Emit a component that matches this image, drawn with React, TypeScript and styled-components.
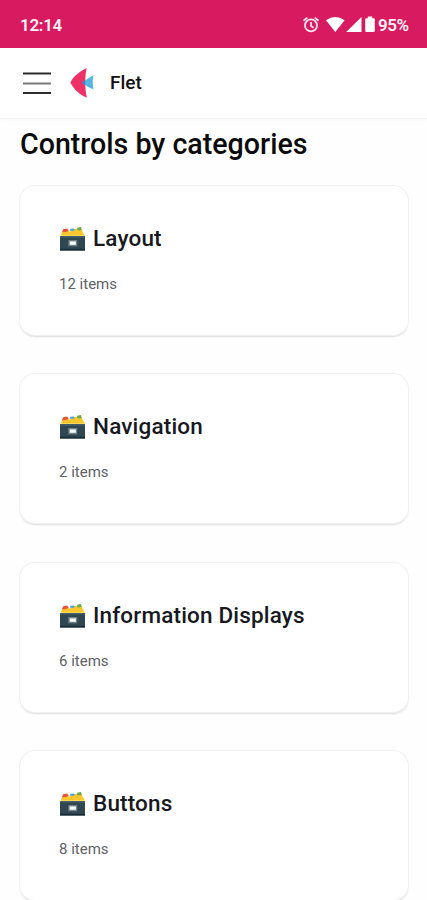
import React from "react";
import styled, { createGlobalStyle } from "styled-components";

const GlobalStyle = createGlobalStyle`
  * { box-sizing: border-box; }
  html, body { margin: 0; height: 900px; overflow: hidden; background: #fff; }
  body { font-family: Roboto, "Liberation Sans", sans-serif; color: #1c1e21; }
`;

const Screen = styled.div`
  width: 427px;
  height: 900px;
  overflow: hidden;
  background: #fefefe;
`;

const StatusBar = styled.header`
  display: flex;
  align-items: center;
  justify-content: space-between;
  height: 47.5px;
  padding: 2px 18px 0 20px;
  background: #d81b60;
  color: #fff3f8;
  font-size: 17px;
  line-height: 20px;
  font-weight: 600;
`;

const Clock = styled.time`
  letter-spacing: -0.3px;
`;

const StatusIcons = styled.div`
  display: flex;
  align-items: center;

  svg { display: block; }
`;

const Battery = styled.span`
  width: 31px;
  white-space: nowrap;
  letter-spacing: -0.5px;
`;

const NavBar = styled.nav`
  display: flex;
  align-items: center;
  height: 71.5px;
  padding: 0 20px 0 23px;
  border-bottom: 1px solid #f3f3f3;
  background: #fff;
  box-shadow: 0 1px 2px rgba(0, 0, 0, 0.04);
`;

const MenuButton = styled.button`
  display: flex;
  width: 28px;
  height: 28px;
  padding: 0;
  border: 0;
  background: none;
`;

const Brand = styled.div`
  display: flex;
  align-items: center;
  gap: 15px;
  margin-left: 18px;
  padding-top: 1px;
  color: #111;
  font-size: 19px;
  line-height: 24px;
  font-weight: 500;
`;

const Main = styled.main`
  padding: 6px 19px 0 20px;
`;

const Title = styled.h1`
  margin: 0;
  height: 61px;
  color: #0b0b0b;
  font-size: 28.6px;
  line-height: 38px;
  font-weight: 500;
  white-space: nowrap;
`;

const CardList = styled.div`
  display: flex;
  flex-direction: column;
  gap: 39.4px;
`;

const Card = styled.article`
  flex: none;
  height: 149px;
  padding: 37px 39px;
  border-radius: 15px;
  background: #fff;
  box-shadow: 0 0 0 1px #f1f1f1, 0 2px 2px rgba(0, 0, 0, 0.14);
`;

const CardTitle = styled.h2`
  display: flex;
  align-items: center;
  gap: 7px;
  margin: 0;
  color: #17191f;
  font-size: 22.5px;
  line-height: 30px;
  font-weight: 500;
  letter-spacing: 0.17px;
  white-space: nowrap;
`;

const CardCount = styled.p`
  margin: 21px 0 0;
  color: #606266;
  font-size: 15px;
  line-height: 20px;
`;

const AlarmIcon = () => (
  <svg width="18" height="18" viewBox="0 0 18 18" fill="none" stroke="#ffe5ef" strokeWidth="1.8">
    <circle cx="9" cy="9.4" r="6" />
    <path d="M1.5 4.8 5.3 1.6M16.5 4.8l-3.8-3.2M9 6v4l2.5 1.7" />
  </svg>
);

const SignalIcons = () => (
  <svg width="58" height="18" viewBox="0 0 58 18" fill="#fff">
    <path d="M6 4.2Q15.3-2 24.6 4.2L15.3 16Z" />
    <path d="M41.5 1v15H26.2Z" />
    <path d="M47.8 2.3V.5h4.4v1.8h1.4q1.2 0 1.2 1.2v11.3q0 1.2-1.2 1.2h-7.2q-1.2 0-1.2-1.2V3.5q0-1.2 1.2-1.2Z" />
  </svg>
);

const MenuIcon = () => (
  <svg width="28" height="28" viewBox="0 0 28 28" fill="none" strokeWidth="2">
    <path stroke="#2c2c2c" d="M0 4.4h28M0 24h28" />
    <path stroke="#777" d="M0 14.5h28" />
  </svg>
);

const FletLogo = () => (
  <svg width="26" height="32" viewBox="0 0 26 32">
    <path fill="#ee3167" d="M17.6 1C11.8 4 5 8.3 1.3 15.5 5 22.6 11 27.8 17.8 30.8 15.8 20.8 15.6 11 17.6 1Z" />
    <path fill="#55b5e5" d="M24.4 8.2Q22.8 15 24.4 22.6 19.4 20.5 12.8 15.7 18.2 11.8 24.4 8.2Z" />
    <path fill="#3f80be" d="m12.8 15.7 3.3-2.3.3 4.7Z" />
  </svg>
);

const FileBoxIcon = () => (
  <svg width="27" height="26" viewBox="0 -2 27 26">
    <path fill="#fff080" d="m1 9.5 2.3-4.7L22 1.8l3.8 5.6v2.1Z" />
    <path fill="#fbc52f" d="m2 8.5 1.4-4L8 3.6l1.2 1.3 3.1-.7 1-1.6 4-.8 2 .7 3.2-.6 1 3 2 3.6Z" />
    <path fill="#ef5338" d="m3 5.2 1.1-3 4.1-.7 1.7 2.4-3 1.2Z" />
    <path fill="#4da6d8" d="m10.5 3.6 1-1.8 3.2-.4 1.2 1.5-2 1Z" />
    <path fill="#6daa4c" d="m17.8 2.4.8-1.9 3.4-.5.7 3-2.7.5Z" />
    <path fill="#304650" d="M1 9h25v14.5H1z" />
    <path fill="#425b65" d="M1 9h25v1.8H1z" />
    <path fill="#182d38" d="M1 21.8h25v1.7H1z" />
    <path fill="#718087" d="M9.3 13h8.9v6.3H9.3z" />
    <path fill="#f5fafb" d="M10.7 14.4h6.2v3.4h-6.2z" />
  </svg>
);

const categories = [
  { name: "Layout", count: 12 },
  { name: "Navigation", count: 2 },
  { name: "Information Displays", count: 6 },
  { name: "Buttons", count: 8 },
];

export default function App() {
  return (
    <Screen>
      <GlobalStyle />
      <StatusBar>
        <Clock>12:14</Clock>
        <StatusIcons>
          <AlarmIcon />
          <SignalIcons />
          <Battery>95%</Battery>
        </StatusIcons>
      </StatusBar>
      <NavBar>
        <MenuButton aria-label="Open navigation"><MenuIcon /></MenuButton>
        <Brand><FletLogo />Flet</Brand>
      </NavBar>
      <Main>
        <Title>Controls by categories</Title>
        <CardList>
          {categories.map(({ name, count }) => (
            <Card key={name}>
              <CardTitle><FileBoxIcon />{name}</CardTitle>
              <CardCount>{count} items</CardCount>
            </Card>
          ))}
        </CardList>
      </Main>
    </Screen>
  );
}
